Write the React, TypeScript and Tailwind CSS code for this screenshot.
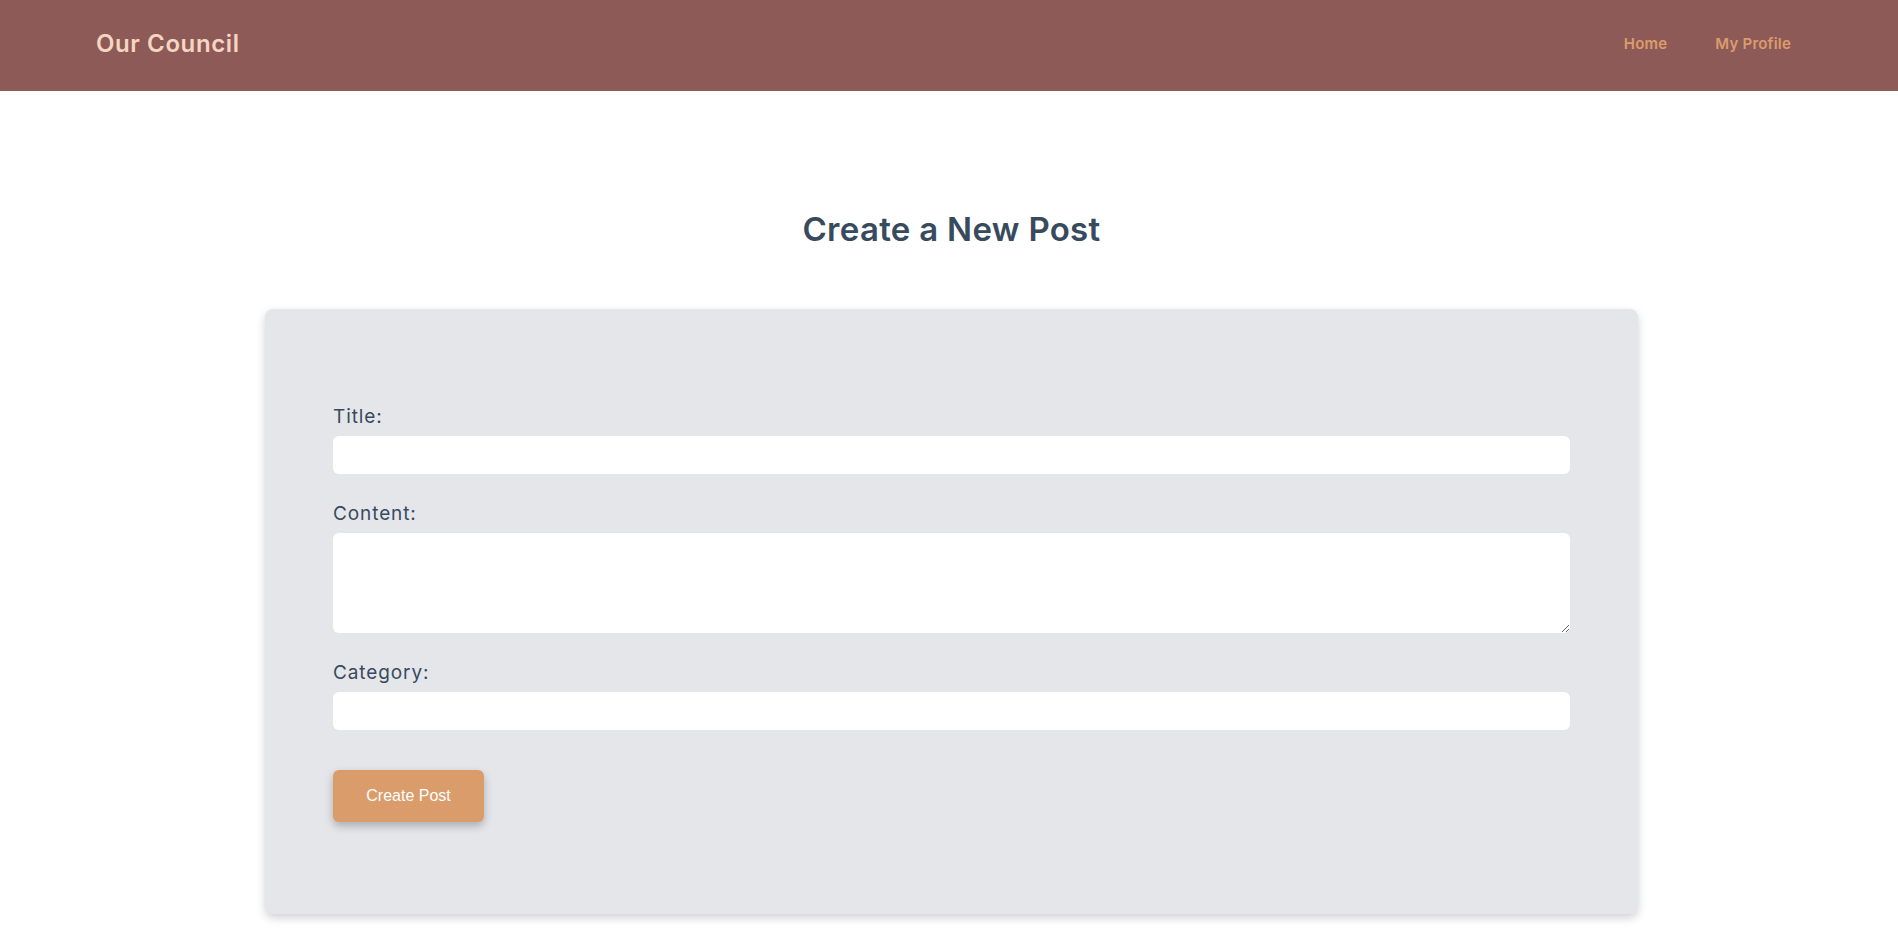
import React from 'react';

const font = { fontFamily: 'Inter, "Noto Sans", sans-serif' };

function Header() {
    return (
        <header className="h-[91px] bg-[#8e5a58] flex items-center justify-between pl-[96px] pr-[107px] pb-[3px]">
            <a href="#" className="text-[24px] font-semibold text-[#f5d6c0] tracking-[0.6px]">
                Our Council
            </a>
            <nav className="flex items-center gap-[48px] text-[15px] font-semibold text-[#dc9c6c] tracking-[0.2px]">
                <a href="#">Home</a>
                <a href="#">My Profile</a>
            </nav>
        </header>
    );
}

export default function App() {
    return (
        <div className="min-h-screen bg-white" style={font}>
            <Header />

            <main className="flex flex-col items-center">
                <h1 className="mt-[118px] ml-[5px] text-[33px] leading-[40px] font-semibold text-[#384a5e] tracking-[0.3px]">
                    Create a New Post
                </h1>

                <form className="mt-[60px] ml-[5px] w-[1373px] bg-[#e5e6ea] rounded-lg shadow-[0_4px_10px_rgba(0,0,0,0.18)] px-[68px] py-[92px]">
                    <div className="mb-6">
                        <label className="block text-[19px] leading-[31px] text-[#384a5e] mb-1 tracking-[0.9px]">Title:</label>
                        <input type="text" className="block w-full h-[38px] bg-white rounded-md outline-none px-3" />
                    </div>

                    <div className="mb-6">
                        <label className="block text-[19px] leading-[31px] text-[#384a5e] mb-1 tracking-[0.9px]">Content:</label>
                        <textarea className="block w-full h-[100px] bg-white rounded-md outline-none px-3 py-2" />
                    </div>

                    <div>
                        <label className="block text-[19px] leading-[31px] text-[#384a5e] mb-1 tracking-[0.9px]">Category:</label>
                        <input type="text" className="block w-full h-[38px] bg-white rounded-md outline-none px-3" />
                    </div>

                    <button
                        type="button"
                        className="mt-10 w-[151px] h-[52px] bg-[#d99c6a] text-white text-[16px] rounded-md shadow-[0_4px_8px_rgba(0,0,0,0.25)]"
                        style={{ fontFamily: '"Liberation Sans", Arial, sans-serif' }}
                    >
                        Create Post
                    </button>
                </form>
            </main>
        </div>
    );
}
